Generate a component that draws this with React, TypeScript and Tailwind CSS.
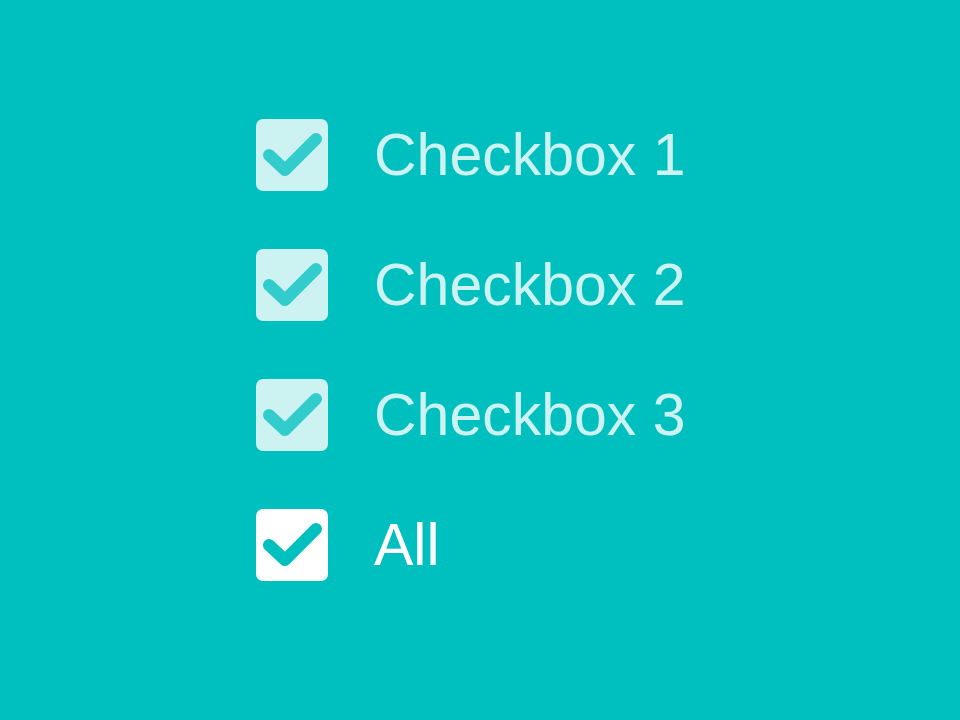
import React, { useState } from "react";

const CheckIcon = ({ color }: { color: string }) => (
    <svg width="72" height="72" viewBox="0 0 72 72" fill="none">
        <path
            d="M13 36 L29 51 L60 20"
            stroke={color}
            strokeWidth="12"
            strokeLinecap="round"
            strokeLinejoin="round"
        />
    </svg>
);

const Row = ({
    label,
    checked,
    faded,
    onToggle,
}: {
    label: string;
    checked: boolean;
    faded?: boolean;
    onToggle: () => void;
}) => (
    <button onClick={onToggle} className="flex items-center gap-[46px] text-left">
        <div
            className={`w-[72px] h-[72px] rounded-[7px] ${faded ? "bg-[#ccf2f2]" : "bg-white"}`}
        >
            {checked && <CheckIcon color={faded ? "#33cccc" : "#00bfbf"} />}
        </div>
        <span
            className={`text-[59px] leading-none font-['Liberation_Sans',Arial,sans-serif] ${faded ? "text-[#ccf2f2]" : "text-white"}`}
        >
            {label}
        </span>
    </button>
);

export default function App() {
    const [items, setItems] = useState([true, true, true]);
    const all = items.every(Boolean);

    return (
        <div className="w-[960px] h-[720px] bg-[#00bfbf] pl-[256px] pt-[119px] flex flex-col gap-[58px]">
            {items.map((c, i) => (
                <Row
                    key={i}
                    label={`Checkbox ${i + 1}`}
                    checked={c}
                    faded
                    onToggle={() =>
                        setItems(items.map((v, j) => (j === i ? !v : v)))
                    }
                />
            ))}
            <Row
                label="All"
                checked={all}
                onToggle={() => setItems(items.map(() => !all))}
            />
        </div>
    );
}
